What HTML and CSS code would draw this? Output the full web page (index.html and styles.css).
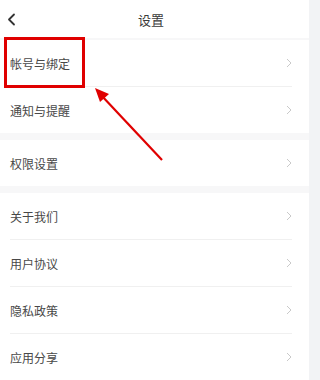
FILE: index.html
```html
<!DOCTYPE html>
<html lang="zh">
<head>
<meta charset="utf-8">
<link rel="stylesheet" href="styles.css">
</head>
<body>
<div class="page">
  <header class="topbar">
    <svg class="back" width="9" height="13" viewBox="0 0 9 13"><path d="M7 1.5 L2 6.5 L7 11.5" fill="none" stroke="#333" stroke-width="1.8" stroke-linecap="round" stroke-linejoin="round"/></svg>
    <h1 class="title">设置</h1>
    <span></span>
  </header>

  <section class="group first">
    <div class="row"><span class="label">帐号与绑定</span><svg class="chev" width="6" height="10" viewBox="0 0 6 10"><path d="M1 1 L5 5 L1 9" fill="none" stroke="#c9c9c9" stroke-width="1"/></svg></div>
    <div class="row"><span class="label">通知与提醒</span><svg class="chev" width="6" height="10" viewBox="0 0 6 10"><path d="M1 1 L5 5 L1 9" fill="none" stroke="#c9c9c9" stroke-width="1"/></svg></div>
  </section>

  <section class="group">
    <div class="row"><span class="label">权限设置</span><svg class="chev" width="6" height="10" viewBox="0 0 6 10"><path d="M1 1 L5 5 L1 9" fill="none" stroke="#c9c9c9" stroke-width="1"/></svg></div>
  </section>

  <section class="group">
    <div class="row"><span class="label">关于我们</span><svg class="chev" width="6" height="10" viewBox="0 0 6 10"><path d="M1 1 L5 5 L1 9" fill="none" stroke="#c9c9c9" stroke-width="1"/></svg></div>
    <div class="row"><span class="label">用户协议</span><svg class="chev" width="6" height="10" viewBox="0 0 6 10"><path d="M1 1 L5 5 L1 9" fill="none" stroke="#c9c9c9" stroke-width="1"/></svg></div>
    <div class="row"><span class="label">隐私政策</span><svg class="chev" width="6" height="10" viewBox="0 0 6 10"><path d="M1 1 L5 5 L1 9" fill="none" stroke="#c9c9c9" stroke-width="1"/></svg></div>
    <div class="row"><span class="label">应用分享</span><svg class="chev" width="6" height="10" viewBox="0 0 6 10"><path d="M1 1 L5 5 L1 9" fill="none" stroke="#c9c9c9" stroke-width="1"/></svg></div>
  </section>

  <div class="highlight"></div>
  <svg class="arrow" width="317" height="380" viewBox="0 0 317 380">
    <line x1="162" y1="160" x2="101" y2="95" stroke="#e00000" stroke-width="2.2"/>
    <polygon points="95,88 109,94 100,102" fill="#e00000"/>
  </svg>
</div>
</body>
</html>
```

FILE: styles.css
```css
html, body {
  margin: 0;
  padding: 0;
  background: #f2f3f5;
}
body {
  font-family: "Noto Sans CJK SC", "Noto Sans", sans-serif;
  color: #444;
}
.page {
  position: relative;
  width: 309px;
  height: 380px;
  overflow: hidden;
  background: #f7f7f8;
}
.topbar {
  height: 38px;
  background: #fff;
  display: grid;
  grid-template-columns: 1fr auto 1fr;
  align-items: center;
  padding: 0 14px 0 7px;
}
.back {
  display: block;
}
.title {
  margin: 0;
  font-size: 13px;
  font-weight: 400;
  color: #3a3a3a;
  line-height: 1;
}
.group {
  background: #fff;
  margin-top: 7px;
}
.group.first {
  margin-top: 2px;
}
.row {
  height: 46px;
  margin: 0 17px 0 10px;
  display: flex;
  align-items: center;
  justify-content: space-between;
  border-bottom: 1px solid #f0f0f0;
}
.row:last-child {
  border-bottom: none;
}
.label {
  font-size: 12px;
  color: #484848;
}
.chev {
  display: block;
}
.highlight {
  position: absolute;
  left: 4px;
  top: 37px;
  width: 75px;
  height: 45px;
  border: 3px solid #e00000;
}
.arrow {
  position: absolute;
  left: 0;
  top: 0;
}
```
